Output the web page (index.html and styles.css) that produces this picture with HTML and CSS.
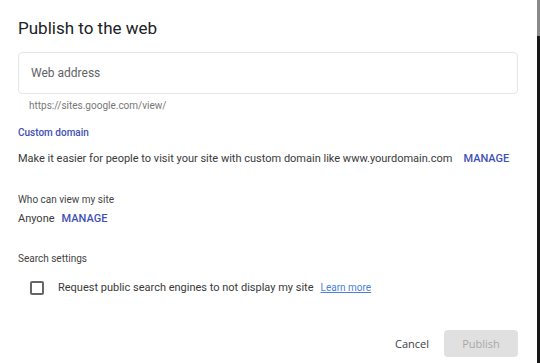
FILE: index.html
```html
<!DOCTYPE html>
<html lang="en">
  <head>
    <meta charset="UTF-8" />
    <meta name="viewport" content="width=device-width, initial-scale=1.0" />
    <title>Publish to the web</title>
    <link rel="stylesheet" href="styles.css">
  </head>
  <body>
    <div class="screen">
      <div class="dialog">
        <h1 class="title">Publish to the web</h1>

        <div class="field">
          <input type="text" class="field-input" placeholder="Web address" />
        </div>
        <div class="field-hint">https://sites.google.com/view/</div>

        <div class="section-link">Custom domain</div>
        <div class="row">
          <span>Make it easier for people to visit your site with custom domain like www.yourdomain.com</span>
          <a class="manage" href="#">MANAGE</a>
        </div>

        <div class="section-label viewers">Who can view my site</div>
        <div class="row small-gap">
          <span>Anyone</span>
          <a class="manage" href="#">MANAGE</a>
        </div>

        <div class="section-label search">Search settings</div>
        <label class="check-row">
          <span class="checkbox"></span>
          <span>Request public search engines to not display my site</span>
          <a class="learn" href="#">Learn more</a>
        </label>

        <!-- Botões -->
        <div class="actions">
          <button class="btn-cancel">Cancel</button>
          <button class="btn-publish" disabled>Publish</button>
        </div>
      </div>
      <div class="edge">
        <div class="edge-top"></div>
      </div>
    </div>
  </body>
</html>
```

FILE: styles.css
```css
* {
  box-sizing: border-box;
  margin: 0;
  padding: 0;
}
body {
  width: 540px;
  height: 363px;
  overflow: hidden;
  font-family: Roboto, "Liberation Sans", Arial, sans-serif;
  color: #333;
  background-color: #1b1b1b;
}
.screen {
  display: flex;
  height: 363px;
}
.dialog {
  width: 537px;
  height: 363px;
  background-color: #fff;
  padding: 18px 19px 0 18px;
}
.edge {
  width: 3px;
  background-color: #161616;
}
.edge-top {
  height: 36px;
  background-color: #8a8a8a;
}

.title {
  font-family: Roboto, sans-serif;
  font-weight: 400;
  font-size: 17px;
  line-height: 21px;
  color: #202124;
}

.field {
  margin-top: 13px;
  height: 42px;
  border: 1px solid #e6e6e6;
  border-radius: 4px;
  display: flex;
  align-items: center;
  padding: 0 12px;
}
.field-input {
  border: none;
  outline: none;
  width: 100%;
  font-family: Roboto, sans-serif;
  font-size: 12px;
  color: #333;
  background: transparent;
}
.field-input::placeholder {
  color: #5f6368;
}
.field-hint {
  margin-top: 5px;
  padding-left: 11px;
  font-size: 10px;
  line-height: 14px;
  color: #777;
}

.section-link {
  margin-top: 13px;
  font-size: 10px;
  line-height: 14px;
  font-weight: 500;
  color: #3f51b5;
}
.section-label {
  font-size: 10px;
  line-height: 14px;
  color: #444;
}
.viewers {
  margin-top: 26px;
}
.search {
  margin-top: 25px;
}

.row {
  margin-top: 11px;
  display: flex;
  align-items: center;
  gap: 11px;
  font-size: 11px;
  line-height: 16px;
  color: #3a3a3a;
}
.small-gap {
  margin-top: 4px;
  gap: 7px;
}
.manage {
  color: #3f51b5;
  font-weight: 500;
  font-size: 11px;
  text-decoration: none;
}

.check-row {
  margin-top: 14px;
  padding-left: 12px;
  display: flex;
  align-items: center;
  font-size: 11px;
  line-height: 16px;
  color: #3a3a3a;
}
.checkbox {
  width: 14px;
  height: 14px;
  border: 2px solid #666;
  border-radius: 2px;
  margin-right: 14px;
}
.learn {
  margin-left: 7px;
  font-size: 10px;
  color: #4a7fdc;
}

.actions {
  margin-top: 34px;
  display: flex;
  justify-content: flex-end;
  align-items: center;
  gap: 13px;
}
.actions button {
  font-family: "Open Sans", Roboto, sans-serif;
  font-size: 11px;
  border: none;
  border-radius: 4px;
  height: 27px;
  background: none;
}
.btn-cancel {
  color: #3c4043;
  padding: 0 2px;
}
.btn-publish {
  width: 74px;
  background-color: #e0e0e0 !important;
  color: #a8a8a8;
}
```
